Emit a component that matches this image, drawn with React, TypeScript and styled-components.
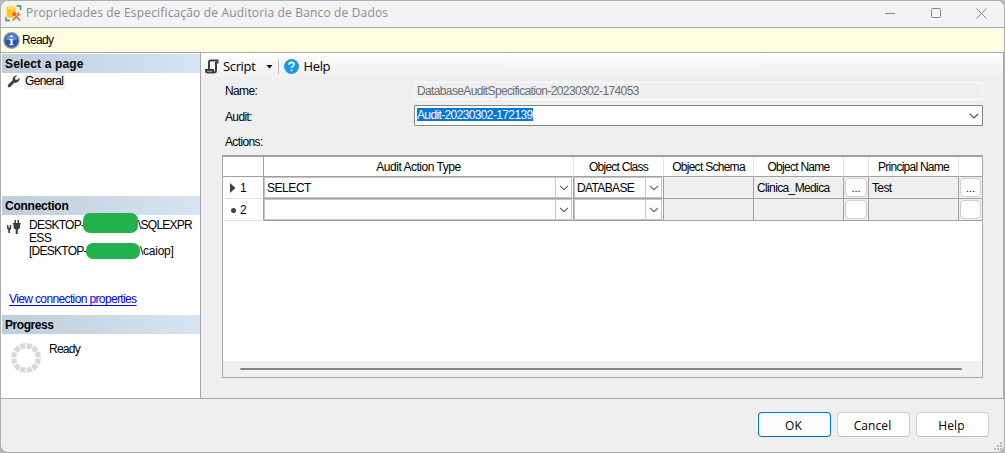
import React from "react";
import styled, { createGlobalStyle } from "styled-components";

const Global = createGlobalStyle`
  * { box-sizing: border-box; }
  body { margin: 0; background: #b9b9bb; overflow: hidden; }
`;

const sans = `"Liberation Sans", Arial, sans-serif`;
const ui = `"Open Sans", "Noto Sans", sans-serif`;

const Window = styled.div`
  width: 1005px;
  height: 453px;
  display: flex;
  flex-direction: column;
  border: 1px solid #adadb0;
  border-radius: 8px;
  overflow: hidden;
  background: #efefef;
  color: #000;
  font: 12px/14px ${sans};
`;

const Text = styled.span<{ $spacing?: number }>`
  white-space: nowrap;
  letter-spacing: ${(p) => p.$spacing ?? -0.63}px;
  font-size: 12px;
`;

const TitleBar = styled.header`
  height: 27px;
  flex: none;
  display: flex;
  align-items: center;
  padding: 0 17px 2px 4px;
  background: #f3f3f3;
  border-bottom: 1px solid #a7a7ac;
`;

const Title = styled.h1`
  flex: 1;
  margin: 0 0 0 4px;
  font: 400 12px/16px ${ui};
  color: #8c8c8c;
  letter-spacing: 0.16px;
  white-space: nowrap;
`;

const WindowControls = styled.div`
  display: flex;
  gap: 34.5px;
`;

const Status = styled.div`
  height: 25px;
  flex: none;
  display: flex;
  align-items: center;
  gap: 2px;
  padding: 0 2px;
  background: #ffffe1;
  border-bottom: 1px solid #a7a7ac;
`;

const Body = styled.div`
  height: 346px;
  flex: none;
  display: flex;
  border-bottom: 1px solid #a7a7ac;
`;

const Sidebar = styled.aside`
  width: 200px;
  flex: none;
  display: flex;
  flex-direction: column;
  padding: 1px 0 0 1px;
  background: #fff;
  border-right: 1px solid #a7a7ac;
`;

const Section = styled.section<{ $height: number }>`
  height: ${(p) => p.$height}px;
  flex: none;
`;

const SectionTitle = styled.h2<{ $spacing?: number }>`
  height: 19px;
  margin: 0;
  padding: 2px 3px 0;
  background: linear-gradient(90deg, #bfcddb, #d7e4f2);
  font: 700 12px/16px ${sans};
  letter-spacing: ${(p) => p.$spacing ?? -0.25}px;
`;

const PageItem = styled.div`
  display: flex;
  align-items: center;
  height: 17px;
  padding-left: 5px;
  gap: 4px;
`;

const PageName = styled.div`
  height: 16px;
  width: 41px;
  padding: 0 1px;
  background: #f0f0f0;
`;

const Server = styled.div`
  display: flex;
  gap: 6px;
  height: 77px;
  padding: 4px 0 0 5px;
  line-height: 13px;
`;

const ServerLine = styled.div`
  display: flex;
  height: 13px;
`;

const HostPrefix = styled.span<{ $width: number }>`
  width: ${(p) => p.$width}px;
  flex: none;
  letter-spacing: -0.75px;
  font-size: 12px;
`;

const Redaction = styled.span<{ $width: number; $height: number; $shift: number }>`
  width: ${(p) => p.$width}px;
  height: ${(p) => p.$height}px;
  margin-top: ${(p) => p.$shift}px;
  border-radius: 7px;
  background: #22b14c;
  flex: none;
`;

const Link = styled.a`
  display: block;
  padding-left: 7px;
  color: #0000ff;
  text-decoration: underline;
  text-underline-offset: 2px;
`;

const ProgressRow = styled.div`
  display: flex;
  gap: 7px;
  padding: 8px 0 0 8px;
`;

const Main = styled.main`
  flex: 1;
  min-width: 0;
  border-right: 1px solid #a7a7ac;
`;

const Toolbar = styled.div`
  height: 26px;
  display: flex;
  align-items: center;
  padding: 0 0 0 4px;
  background: linear-gradient(#fdfdfd, #efefef);
  font-family: ${ui};
`;

const ToolbarLabel = styled.span`
  margin-left: 4px;
  font-size: 13px;
  letter-spacing: -0.35px;
`;

const DropArrow = styled.svg`
  margin: 1px 0 0 11px;
`;

const ToolbarDivider = styled.span`
  width: 1px;
  height: 15px;
  margin: 0 5px 0 5px;
  background: #bdbdbd;
`;

const Form = styled.div`
  padding: 3px 20px 0 21px;
`;

const Field = styled.div<{ $height: number }>`
  height: ${(p) => p.$height}px;
  display: flex;
`;

const Label = styled.label<{ $top: number }>`
  width: 192px;
  flex: none;
  padding: ${(p) => p.$top}px 0 0 3px;
`;

const ReadonlyBox = styled.div`
  flex: 1;
  height: 18px;
  padding: 1px 2px;
  border: 1px solid #fafafa;
  color: #6d6d6d;
`;

const Combo = styled.div`
  flex: 1;
  height: 21px;
  display: flex;
  justify-content: space-between;
  padding: 2px 3px 0 2px;
  border: 1px solid #858585;
  border-radius: 1px;
  background: #fff;
`;

const Selection = styled.span`
  height: 13px;
  line-height: 14px;
  background: #0078d7;
  color: #fff;
`;

const GridPanel = styled.div`
  height: 223px;
  width: 761px;
  display: flex;
  flex-direction: column;
  border: 1px solid #a7a7ac;
  border-top: 2px solid #a0a0a0;
  background: #fff;
`;

const GridRow = styled.div<{ $height: number }>`
  height: ${(p) => p.$height}px;
  flex: none;
  display: grid;
  grid-template-columns: 41px 310px 90px 90px 90px 25px 90px 23px;
`;

const HeadCell = styled.div<{ $strong?: boolean }>`
  display: flex;
  align-items: center;
  justify-content: center;
  padding-top: 1px;
  border-right: 1px solid ${(p) => (p.$strong ? "#a0a0a0" : "#e3e3e3")};
  border-bottom: 1px solid #a0a0a0;
  &:last-child { border-right: 0; }
`;

const RowHead = styled.div`
  display: flex;
  align-items: center;
  gap: 4px;
  padding-left: 7px;
  border-right: 1px solid #a0a0a0;
  border-bottom: 1px solid #e0e0e0;
`;

const Cell = styled.div`
  display: flex;
  align-items: center;
  padding-left: 3px;
  border-right: 1px solid #a0a0a0;
  border-bottom: 1px solid #a0a0a0;
  background: #efefef;
  &:last-child { border-right: 0; }
`;

const ComboCell = styled.div`
  display: flex;
  padding: 0 1px 0 0;
  border-right: 1px solid #a0a0a0;
  border-bottom: 1px solid #a0a0a0;
`;

const ComboInner = styled.div`
  flex: 1;
  display: flex;
  align-items: center;
  justify-content: space-between;
  padding-left: 2px;
  border: 1px solid #c6c6c6;
  background: #fdfdfd;
`;

const DropZone = styled.span`
  width: 16px;
  align-self: stretch;
  display: flex;
  align-items: center;
  justify-content: center;
  border-left: 1px solid #c9c9c9;
`;

const ButtonCell = styled(Cell)`
  padding: 1px;
`;

const MoreButton = styled.button`
  flex: 1;
  align-self: stretch;
  padding: 1px 0 0;
  border: 1px solid #cfcfcf;
  border-radius: 4px;
  background: #fdfdfd;
  color: #000;
  font: 11px/14px ${sans};
`;

const ScrollTrack = styled.div`
  height: 16px;
  margin-top: auto;
  padding: 7px 20px 0 17px;
  background: #f0f0f0;
`;

const ScrollThumb = styled.div`
  height: 2px;
  border-radius: 1px;
  background: #858585;
`;

const Footer = styled.footer`
  flex: 1;
  display: flex;
  justify-content: flex-end;
  gap: 6px;
  padding: 13px 15px 0 0;
`;

const Button = styled.button<{ $primary?: boolean }>`
  width: 73px;
  height: 25px;
  padding: 2px 2px 0 0;
  border: 1px solid ${(p) => (p.$primary ? "#0078d4" : "#d0d0d0")};
  border-bottom-color: ${(p) => (p.$primary ? "#0067b8" : "#bcbcbc")};
  border-radius: 4px;
  background: #fdfdfd;
  color: #000;
  font: 12px/16px ${ui};
  letter-spacing: 0.1px;
`;

const Grip = styled.svg`
  position: absolute;
  left: 994px;
  top: 442px;
`;

const Chevron = () => (
  <svg width="10" height="6" viewBox="0 0 10 6" fill="none" stroke="#606060" strokeWidth="1.1">
    <path d="M1 .8 5 4.7 9 .8" />
  </svg>
);

const DatabaseIcon = () => (
  <svg width="17" height="17" viewBox="0 0 17 17" fill="none">
    <path d="M1.500 2.500v8.500c0 1.200 2 1.800 4.500 1.800s4.500-.6 4.500-1.800V2.500z" fill="#fbc81e" />
    <ellipse cx="6" cy="2.600" rx="4.500" ry="1.900" fill="#ffdf6b" />
    <path d="M11.500 1h4v4M1 12v3.500h4" stroke="#359a4b" strokeWidth="1.500" />
    <path d="m8 15 6.500-6.500M8.500 9l6.500 6.500" stroke="#f3f3f3" strokeWidth="3" />
    <path d="m7.500 15.500 6-6M9.500 9.500l5.500 6" stroke="#e8682a" strokeWidth="1.700" />
    <path d="M7 9.500 9.500 7l2 1.500-2.500 2.500zM13 7.200v2.500h2.500" stroke="#e8682a" fill="#e8682a" strokeWidth=".8" />
  </svg>
);

const InfoIcon = () => (
  <svg width="17" height="17" viewBox="0 0 16 16">
    <circle cx="8" cy="8" r="7.200" fill="#2454b5" stroke="#989ca6" strokeWidth="1.400" />
    <path d="M2.500 7a5.600 5.600 0 0 1 11 0q-5 2-11 0" fill="#5d8be0" />
    <path d="M7 3h2v2H7zM6 6.500h3v5h1v1H6v-1h1v-4H6z" fill="#fff" />
  </svg>
);

const WrenchIcon = () => (
  <svg width="13" height="13" viewBox="0 0 13 13">
    <path d="m2.200 10.800 5-5" stroke="#3f3f3f" strokeWidth="3" strokeLinecap="round" />
    <path d="M10.200.6 8.200 2.600v2.200h2.200l2-2a3.900 3.900 0 0 1-5.600 4.400A3.900 3.900 0 0 1 10.200.6" fill="#3f3f3f" />
  </svg>
);

const PlugIcon = () => (
  <svg width="16" height="16" viewBox="0 0 16 16" fill="#3c3c3c">
    <path d="M7.500 1H9v3H7.500zM10.500 1H12v3h-1.500zM5.800 4h8v1.500H13V9l-2.200 1.700V15H8.700v-4.300L6.600 9V5.500h-.8z" />
    <path d="M0 6h1.400v2.500h1.400V6h1.400v3.500L3 11v3H1.300v-3L0 9.500z" />
  </svg>
);

const ScriptIcon = () => (
  <svg width="14" height="15" viewBox="0 0 14 15" fill="none" stroke="#3f3f3f" strokeWidth="2">
    <path d="M12.500 4.500V1.500H5.500q-1.500 0-1.500 1.500v8M11 3v8q0 2.500-2 2.500H2.500q-1.500 0-1.500-2.500h7v2" />
  </svg>
);

const HelpIcon = () => (
  <svg width="15" height="15" viewBox="0 0 14 14" fill="none">
    <circle cx="7" cy="7" r="7" fill="#1a9be0" />
    <path d="M4.800 5.300c0-3 4.500-2.800 4.500-.2C9.300 6.600 7 6.700 7 8.500M7 9.800v1.600" stroke="#fff" strokeWidth="1.500" />
  </svg>
);

const Spinner = () => (
  <svg width="32" height="32" viewBox="0 0 32 32">
    <circle cx="16" cy="16" r="12.300" fill="none" stroke="#d9d9d9" strokeWidth="5.400" pathLength="120" strokeDasharray="8.200 1.800" strokeDashoffset="-0.900" />
  </svg>
);

const rows = [
  { n: "1", action: "SELECT", cls: "DATABASE", object: "Clinica_Medica", principal: "Test", more: "..." },
  { n: "2", action: "", cls: "", object: "", principal: "", more: "" },
];

const headers = [
  { label: "" },
  { label: "Audit Action Type", spacing: -0.48 },
  { label: "Object Class", spacing: -0.75 },
  { label: "Object Schema", spacing: -0.72 },
  { label: "Object Name", spacing: -0.72 },
  { label: "" },
  { label: "Principal Name", spacing: -0.75 },
  { label: "" },
];

export default function App() {
  return (
    <Window>
      <Global />
      <TitleBar>
        <DatabaseIcon />
        <Title>Propriedades de Especificação de Auditoria de Banco de Dados</Title>
        <WindowControls>
          <svg width="11" height="11" stroke="#858585" fill="none"><path d="M0 5.500h10" /></svg>
          <svg width="11" height="11" stroke="#858585" fill="none"><rect x=".5" y=".5" width="9" height="9" rx="1" /></svg>
          <svg width="11" height="11" stroke="#858585" fill="none"><path d="m.5.500 10 10m0-10-10 10" /></svg>
        </WindowControls>
      </TitleBar>
      <Status>
        <InfoIcon />
        <Text $spacing={-0.7}>Ready</Text>
      </Status>
      <Body>
        <Sidebar>
          <Section $height={142}>
            <SectionTitle $spacing={0.15}>Select a page</SectionTitle>
            <PageItem>
              <WrenchIcon />
              <PageName><Text>General</Text></PageName>
            </PageItem>
          </Section>
          <Section $height={119}>
            <SectionTitle>Connection</SectionTitle>
            <Server>
              <PlugIcon />
              <div>
                <ServerLine>
                  <HostPrefix $width={54}>DESKTOP-</HostPrefix>
                  <Redaction $width={55} $height={20} $shift={-6} />
                  <Text $spacing={-0.75}>\SQLEXPR</Text>
                </ServerLine>
                <ServerLine><Text>ESS</Text></ServerLine>
                <ServerLine>
                  <HostPrefix $width={57}>[DESKTOP-</HostPrefix>
                  <Redaction $width={54} $height={16} $shift={-2} />
                  <Text $spacing={-0.25}>\caiop]</Text>
                </ServerLine>
              </div>
            </Server>
            <Link><Text>View connection properties</Text></Link>
          </Section>
          <Section $height={82}>
            <SectionTitle $spacing={-0.45}>Progress</SectionTitle>
            <ProgressRow>
              <Spinner />
              <Text $spacing={-0.75}>Ready</Text>
            </ProgressRow>
          </Section>
        </Sidebar>
        <Main>
          <Toolbar>
            <ScriptIcon />
            <ToolbarLabel>Script</ToolbarLabel>
            <DropArrow width="7" height="4"><path d="M.5 0h6l-3 3.500z" /></DropArrow>
            <ToolbarDivider />
            <HelpIcon />
            <ToolbarLabel>Help</ToolbarLabel>
          </Toolbar>
          <Form>
            <Field $height={23}>
              <Label $top={2}><Text>Name:</Text></Label>
              <ReadonlyBox><Text>DatabaseAuditSpecification-20230302-174053</Text></ReadonlyBox>
            </Field>
            <Field $height={29}>
              <Label $top={5}><Text>Audit:</Text></Label>
              <Combo>
                <Selection><Text>Audit-20230302-172139</Text></Selection>
                <svg width="10" height="16" fill="none" stroke="#505050" strokeWidth="1.100"><path d="m1 6 4 4 4-4" /></svg>
              </Combo>
            </Field>
            <Field $height={21}>
              <Label $top={1}><Text>Actions:</Text></Label>
            </Field>
            <GridPanel>
              <GridRow $height={20}>
                {headers.map((h, i) => (
                  <HeadCell key={i} $strong={i === 0}><Text $spacing={h.spacing}>{h.label}</Text></HeadCell>
                ))}
              </GridRow>
              {rows.map((r) => (
                <GridRow key={r.n} $height={22}>
                  <RowHead>
                    <svg width="6" height="10" fill="#404040">
                      {r.action ? <path d="M0 0v10l5.500-5z" /> : <circle cx="3.500" cy="5.500" r="2.500" />}
                    </svg>
                    <Text>{r.n}</Text>
                  </RowHead>
                  <ComboCell><ComboInner><Text $spacing={-0.45}>{r.action}</Text><DropZone><Chevron /></DropZone></ComboInner></ComboCell>
                  <ComboCell><ComboInner><Text>{r.cls}</Text><DropZone><Chevron /></DropZone></ComboInner></ComboCell>
                  <Cell />
                  <Cell><Text>{r.object}</Text></Cell>
                  <ButtonCell><MoreButton>{r.more}</MoreButton></ButtonCell>
                  <Cell><Text>{r.principal}</Text></Cell>
                  <ButtonCell><MoreButton>{r.more}</MoreButton></ButtonCell>
                </GridRow>
              ))}
              <ScrollTrack><ScrollThumb /></ScrollTrack>
            </GridPanel>
          </Form>
        </Main>
      </Body>
      <Footer>
        <Button $primary>OK</Button>
        <Button>Cancel</Button>
        <Button>Help</Button>
      </Footer>
      <Grip width="10" height="10" fill="#b8b8b8">
        <path d="M6 0h2v2H6zM3 3h2v2H3zM6 3h2v2H6zM0 6h2v2H0zM3 6h2v2H3zM6 6h2v2H6z" />
      </Grip>
    </Window>
  );
}
